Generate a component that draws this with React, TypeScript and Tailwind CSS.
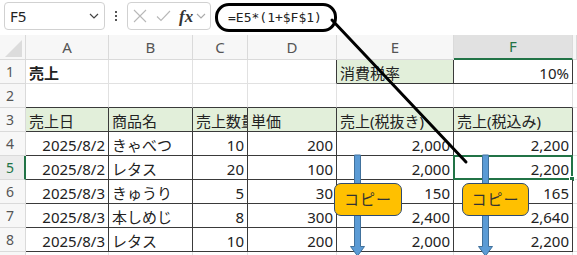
import React from "react";

type Cell = { t?: string; align?: "l" | "r"; bold?: boolean };

const rows: Cell[][] = [
  [{ t: "売上", bold: true }, {}, {}, {}, { t: "消費税率" }, { t: "10%", align: "r" }],
  [{}, {}, {}, {}, {}, {}],
  [{ t: "売上日" }, { t: "商品名" }, { t: "売上数量" }, { t: "単価" }, { t: "売上(税抜き)" }, { t: "売上(税込み)" }],
  [
    { t: "2025/8/2", align: "r" }, { t: "きゃべつ" }, { t: "10", align: "r" }, { t: "200", align: "r" },
    { t: "2,000", align: "r" }, { t: "2,200", align: "r" },
  ],
  [
    { t: "2025/8/2", align: "r" }, { t: "レタス" }, { t: "20", align: "r" }, { t: "100", align: "r" },
    { t: "2,000", align: "r" }, { t: "2,200", align: "r" },
  ],
  [
    { t: "2025/8/3", align: "r" }, { t: "きゅうり" }, { t: "5", align: "r" }, { t: "30", align: "r" },
    { t: "150", align: "r" }, { t: "165", align: "r" },
  ],
  [
    { t: "2025/8/3", align: "r" }, { t: "本しめじ" }, { t: "8", align: "r" }, { t: "300", align: "r" },
    { t: "2,400", align: "r" }, { t: "2,640", align: "r" },
  ],
  [
    { t: "2025/8/3", align: "r" }, { t: "レタス" }, { t: "10", align: "r" }, { t: "200", align: "r" },
    { t: "2,000", align: "r" }, { t: "2,200", align: "r" },
  ],
  [{}, {}, {}, {}, {}, {}],
];

const letters = ["A", "B", "C", "D", "E", "F", ""];

function cellClass(r: number, c: number) {
  const table = r >= 3 && r <= 8 && c <= 5;
  const darkR = table || (r === 1 && c >= 3 && c <= 5);
  const darkB = (r >= 2 && r <= 8 && c <= 5) || (r === 1 && (c === 4 || c === 5));
  const green = (r === 3 && c <= 5) || (r === 1 && c === 4);
  return [
    "relative h-[24px] border-r border-b flex items-center pt-[3px] px-[3px] whitespace-nowrap",
    darkR ? "border-r-[#3a3a3a]" : "border-r-[#e1e1e1]",
    darkB ? "border-b-[#3a3a3a]" : "border-b-[#e1e1e1]",
    green ? "bg-[#e2efda]" : "bg-white",
  ].join(" ");
}

export default function App() {
  return (
    <div className="relative w-[577px] h-[255px] overflow-hidden bg-white font-['Noto_Sans','Noto_Sans_CJK_JP',sans-serif] text-[#222]">
      {/* formula bar */}
      <div className="h-[35px] flex items-start pt-[2px] bg-white">
        <div className="ml-[4px] w-[101px] h-[28px] border border-[#d1d1d1] rounded-[4px] flex items-center justify-between pl-[5px] pr-[5px]">
          <span className="text-[15px] text-[#222] leading-none">F5</span>
          <svg width="10" height="6" viewBox="0 0 10 6">
            <path d="M1 1 L5 5 L9 1" fill="none" stroke="#444" strokeWidth="1.2" />
          </svg>
        </div>
        <div className="w-[22px] h-[28px] flex flex-col items-center justify-center gap-[2px]">
          <div className="w-[2px] h-[2px] bg-[#555]" />
          <div className="w-[2px] h-[2px] bg-[#555]" />
          <div className="w-[2px] h-[2px] bg-[#555]" />
        </div>
        <div className="w-[84px] h-[28px] border border-[#d1d1d1] rounded-[4px] flex items-center pl-[5px]">
          <svg width="14" height="14" viewBox="0 0 14 14" className="mr-[9px]">
            <path d="M1 1 L13 13 M13 1 L1 13" stroke="#b8b8b8" strokeWidth="1.1" />
          </svg>
          <svg width="15" height="12" viewBox="0 0 15 12" className="mr-[8px]">
            <path d="M1 6.5 L5 10.5 L14 1" fill="none" stroke="#b8b8b8" strokeWidth="1.1" />
          </svg>
          <span className="font-['Liberation_Serif',serif] italic font-bold text-[17px] leading-none text-[#333] mr-[3px]">fx</span>
          <svg width="10" height="6" viewBox="0 0 10 6">
            <path d="M1 1 L5 5 L9 1" fill="none" stroke="#aaa" strokeWidth="1.1" />
          </svg>
        </div>
        <div className="ml-[4px] mt-[1px] w-[122px] h-[29px] border-[3px] border-black rounded-[14px] flex items-center pl-[10px] font-['DejaVu_Sans_Mono',monospace] text-[13px] text-[#222]">
          =E5*(1+$F$1)
        </div>
      </div>

      {/* grid */}
      <div className="grid grid-cols-[26px_83px_84px_55px_89px_117px_119px_1fr]">
        <div className="h-[25px] bg-[#f7f7f7] border-r border-b border-[#dadada] flex items-end justify-end pr-[3px] pb-[2px]">
          <svg width="17" height="17" viewBox="0 0 17 17">
            <polygon points="17,0 17,17 0,17" fill="#dcdcdc" />
          </svg>
        </div>
        {letters.map((l, i) =>
          i === 5 ? (
            <div
              key={i}
              className="h-[25px] bg-[#e1e1e1] border-r border-r-[#dadada] border-b-2 border-b-[#217346] flex items-center justify-center text-[15px] text-[#217346]"
            >
              {l}
            </div>
          ) : (
            <div
              key={i}
              className="h-[25px] bg-[#f7f7f7] border-r border-b border-[#dadada] flex items-center justify-center text-[15px] text-[#555]"
            >
              {l}
            </div>
          )
        )}

        {rows.map((row, ri) => {
          const r = ri + 1;
          return (
            <React.Fragment key={r}>
              {r === 5 ? (
                <div className="h-[24px] bg-[#ececec] border-r-2 border-r-[#217346] border-b border-b-[#dadada] flex items-center justify-center pr-[4px] text-[14px] text-[#217346]">
                  {r}
                </div>
              ) : (
                <div className="h-[24px] bg-[#f7f7f7] border-r border-b border-[#dadada] flex items-center justify-center pr-[5px] text-[14px] text-[#555]">
                  {r <= 8 ? r : ""}
                </div>
              )}
              {row.map((cell, c) => (
                <div
                  key={c}
                  className={
                    cellClass(r, c) +
                    (cell.align === "r" ? " justify-end" : " justify-start") +
                    (r === 3 && c === 2 ? " overflow-hidden" : "")
                  }
                >
                  <span className={"text-[15px] leading-none" + (cell.bold ? " font-bold" : "")}>{cell.t}</span>
                  {r === 5 && c === 5 && (
                    <>
                      <div className="absolute left-[-1px] top-[-1px] right-[-1px] bottom-[-1px] border-2 border-[#217346]" />
                      <div className="absolute right-[-3px] bottom-[-3px] w-[6px] h-[6px] bg-[#217346] border border-white" />
                    </>
                  )}
                </div>
              ))}
              <div className="h-[24px] border-b border-[#e1e1e1] bg-white" />
            </React.Fragment>
          );
        })}
      </div>

      {/* arrows */}
      <svg className="absolute left-0 top-0 pointer-events-none" width="577" height="255">
        <path d="M354.5 155 H360.5 V246.5 H364.5 L357.5 256 L350.5 246.5 H354.5 Z" fill="#5b9bd5" stroke="#41719c" strokeWidth="1" />
        <path d="M482.5 155 H488.5 V246.5 H492.5 L485.5 256 L478.5 246.5 H482.5 Z" fill="#5b9bd5" stroke="#41719c" strokeWidth="1" />
      </svg>

      {/* copy callouts */}
      <div className="absolute left-[334px] top-[183px] w-[68px] h-[33px] rounded-[7px] border-[1.5px] border-[#2f4b70] bg-[#ffc000] flex items-center justify-center text-[15px] text-[#333] tracking-[1px] font-['Noto_Sans_CJK_JP',sans-serif]">
        コピー
      </div>
      <div className="absolute left-[462px] top-[183px] w-[67px] h-[33px] rounded-[7px] border-[1.5px] border-[#2f4b70] bg-[#ffc000] flex items-center justify-center text-[15px] text-[#333] tracking-[1px] font-['Noto_Sans_CJK_JP',sans-serif]">
        コピー
      </div>

      {/* pointer line */}
      <svg className="absolute left-0 top-0 pointer-events-none" width="577" height="255">
        <line x1="332" y1="20" x2="466" y2="162" stroke="#000" strokeWidth="3" strokeLinecap="round" />
      </svg>
    </div>
  );
}
